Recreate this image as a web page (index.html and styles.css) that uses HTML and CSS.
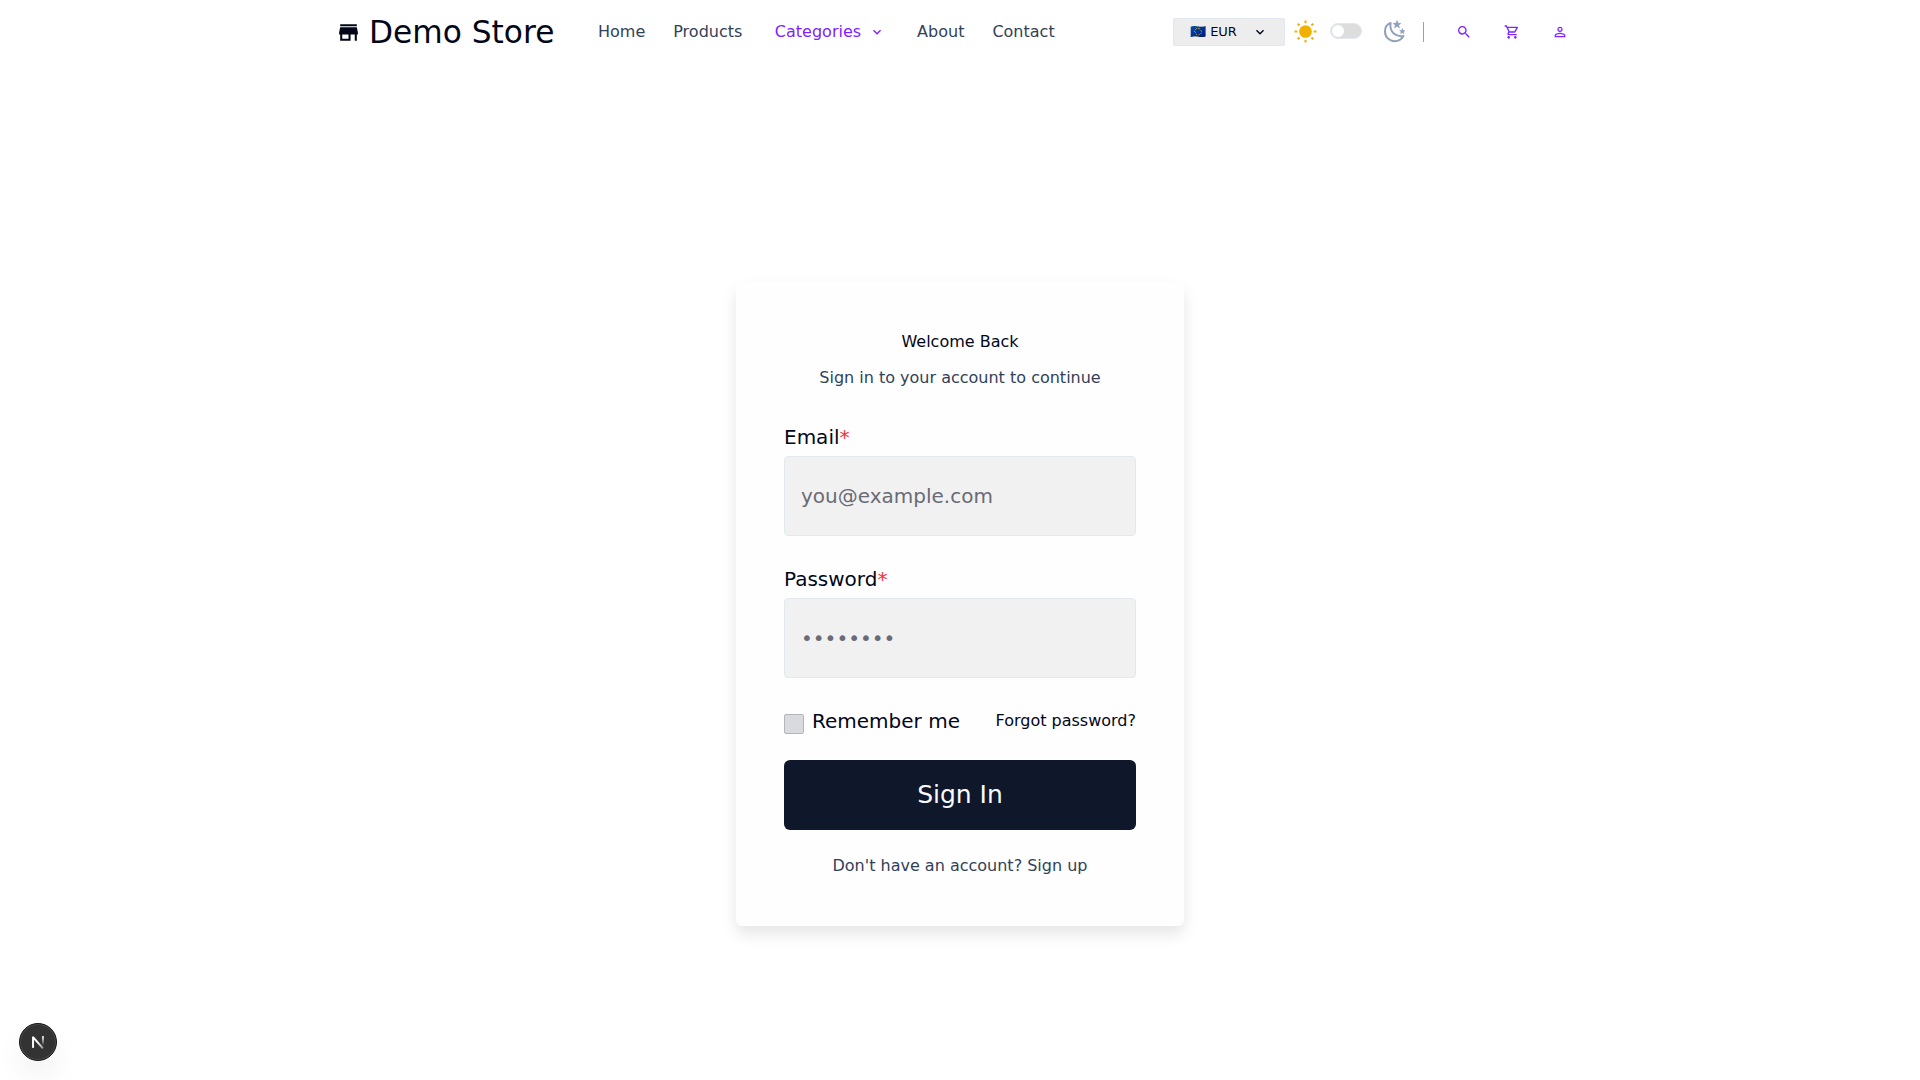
FILE: index.html
```html
<!DOCTYPE html>
<html lang="en">
<head>
<meta charset="utf-8">
<title>Demo Store</title>
<link rel="stylesheet" href="styles.css">
</head>
<body>
<header class="header">
  <a class="brand">
    <svg class="brand-icon" viewBox="0 0 24 24" fill="currentColor"><path d="M20 4H4v2h16V4zm1 10v-2l-1-5H4l-1 5v2h1v6h10v-6h4v6h2v-6h1zm-9 4H6v-4h6v4z"/></svg>
    <span>Demo Store</span>
  </a>
  <nav class="nav">
    <a>Home</a>
    <a>Products</a>
    <a class="categories">Categories
      <svg class="chevron" viewBox="0 0 24 24" fill="currentColor"><path d="M7.41 8.59 12 13.17l4.59-4.58L18 10l-6 6-6-6z"/></svg>
    </a>
    <a>About</a>
    <a>Contact</a>
  </nav>
  <div class="tools">
    <div class="currency"><div class="currency-box">
      <span class="currency-name">🇪🇺 EUR</span>
      <svg class="chevron-lg" viewBox="0 0 24 24" fill="currentColor"><path d="M7.41 8.59 12 13.17l4.59-4.58L18 10l-6 6-6-6z"/></svg>
    </div></div>
    <svg class="sun" viewBox="0 0 24 24" fill="currentColor" stroke="currentColor" stroke-width="2.1"><circle cx="12" cy="12" r="6.6" stroke="none"/><path d="M12 .5v3M12 20.5v3M.5 12h3M20.5 12h3M3.800 3.800l2 2M18.200 18.200l2 2M3.800 20.200l2-2M18.200 5.800l2-2"/></svg>
    <span class="toggle"><span class="knob"></span></span>
    <svg class="moon" viewBox="0 0 22 23"><path d="M6.600 2.900C2.700 4.400 1 8 1 11.500 1 17 5.300 21.200 10.600 21.200c3.600 0 7-1.900 8.900-5.200-7 1.400-14.500-3.500-12.900-13.100z" fill="none" stroke="currentColor" stroke-width="2" stroke-linejoin="round"/><path d="m13 .3 1.100 2.800 3 .2-2.300 1.900.8 2.900L13 6.500l-2.600 1.600.8-2.900-2.300-1.900 3-.2zM18.300 8.500l.8 1.800 2 .2-1.500 1.300.4 2-1.700-1-1.700 1 .4-2-1.500-1.300 2-.2z" fill="currentColor" stroke="currentColor" stroke-width=".4"/></svg>
    <span class="divider"></span>
    <svg class="tool-icon" viewBox="0 0 24 24" fill="currentColor"><path d="M15.500 14h-.79l-.28-.27A6.471 6.471 0 0 0 16 9.500 6.500 6.500 0 1 0 9.500 16c1.610 0 3.090-.59 4.230-1.570l.27.28v.79l5 4.990L20.490 19l-4.990-5zm-6 0C7.010 14 5 11.990 5 9.500S7.010 5 9.500 5 14 7.010 14 9.500 11.990 14 9.500 14z"/></svg>
    <svg class="tool-icon" viewBox="0 0 24 24" fill="currentColor"><path d="M15.550 13c.75 0 1.410-.41 1.750-1.030l3.580-6.490A.996.996 0 0 0 20.010 4H5.210l-.94-2H1v2h2l3.600 7.590-1.350 2.440C4.520 15.370 5.480 17 7 17h12v-2H7l1.100-2h7.450zM6.160 6h12.150l-2.760 5H8.530L6.160 6zM7 18c-1.100 0-1.990.9-1.990 2S5.900 22 7 22s2-.9 2-2-.9-2-2-2zm10 0c-1.100 0-1.990.9-1.990 2s.89 2 1.990 2 2-.9 2-2-.9-2-2-2z"/></svg>
    <svg class="tool-icon" viewBox="0 0 24 24" fill="currentColor"><path d="M12 5.900a2.100 2.100 0 1 1 0 4.200 2.100 2.100 0 0 1 0-4.200m0 9c2.970 0 6.100 1.460 6.100 2.100v1.100H5.900V17c0-.64 3.130-2.100 6.100-2.100M12 4C9.790 4 8 5.790 8 8s1.790 4 4 4 4-1.790 4-4-1.790-4-4-4zm0 9c-2.670 0-8 1.340-8 4v3h16v-3c0-2.660-5.330-4-8-4z"/></svg>
  </div>
</header>
<main class="main">
  <form class="card">
    <h1 class="title">Welcome Back</h1>
    <p class="subtitle">Sign in to your account to continue</p>
    <div class="field">
      <label class="label" for="email">Email<span class="required">*</span></label>
      <input class="input" id="email" type="email" placeholder="you@example.com">
    </div>
    <div class="field">
      <label class="label" for="password">Password<span class="required">*</span></label>
      <input class="input" id="password" type="password" placeholder="••••••••">
    </div>
    <div class="options">
      <label class="remember"><span class="checkbox"></span>Remember me</label>
      <a class="forgot">Forgot password?</a>
    </div>
    <button class="submit" type="button">Sign In</button>
    <p class="signup">Don't have an account? Sign up</p>
  </form>
</main>
<div class="dev-badge">
  <svg viewBox="0 0 40 40" fill="none">
    <defs>
      <linearGradient id="stem" x1="0" y1="13" x2="0" y2="24" gradientUnits="userSpaceOnUse"><stop stop-color="#fff"/><stop offset="1" stop-color="#fff" stop-opacity="0"/></linearGradient>
      <linearGradient id="diagonal" x1="20" y1="20" x2="27" y2="30" gradientUnits="userSpaceOnUse"><stop stop-color="#fff"/><stop offset="1" stop-color="#fff" stop-opacity="0.300"/></linearGradient>
    </defs>
    <path d="M14.500 14.500l11 12.500" stroke="url(#diagonal)" stroke-width="2.200"/>
    <path d="M14.500 26.500V14" stroke="#fff" stroke-width="2.200"/>
    <path d="M25.500 13.500v11" stroke="url(#stem)" stroke-width="2.200"/>
  </svg>
</div>
</body>
</html>
```
FILE: styles.css
```css
* { box-sizing: border-box; }
body {
  margin: 0;
  height: 1080px;
  overflow: hidden;
  display: flex;
  flex-direction: column;
  background: #fff;
  color: #020618;
  font: 16px/24px "DejaVu Sans", sans-serif;
}
h1, p { margin: 0; font-size: 16px; font-weight: 400; }
svg { display: block; flex: none; }

.header {
  display: flex;
  align-items: center;
  height: 64px;
  width: 1280px;
  margin: 0 auto;
  padding: 0 16px;
}
.brand { display: flex; align-items: center; gap: 8px; width: 262px; font-size: 31.25px; line-height: 48px; }
.brand-icon { width: 25px; height: 25px; }
.nav { display: flex; align-items: center; gap: 28px; color: #314158; }
.categories { display: flex; align-items: center; gap: 8px; padding: 0 4px 0 4.5px; color: #7f22fe; }
.chevron { width: 16px; height: 16px; }

.tools { display: flex; align-items: center; margin-left: auto; color: #7f22fe; }
.currency { width: 112px; height: 28px; background: #ededed; }
.currency-box {
  display: flex;
  align-items: center;
  justify-content: space-between;
  height: 28px;
  padding: 0 16px;
  border: 1px solid #e2e8f0;
  border-radius: 4px;
  color: #020618;
  font-size: 13px;
}
.chevron-lg { width: 16px; height: 16px; }
.sun { width: 23px; height: 23px; margin: 0 0 1px 9px; color: #f0b100; }
.toggle { width: 32px; height: 16px; margin: 0 0 2px 13px; padding: 1px; border: 1px solid #e2e8f0; border-radius: 8px; background: #ddd; }
.knob { display: block; width: 12px; height: 12px; border-radius: 50%; background: #fff; }
.moon { width: 22px; height: 23px; margin: 0 0 1px 22px; color: #90a1b9; }
.divider { width: 1px; height: 20px; margin: 0 16px 0 17px; background: #90a1b9; }
.tool-icon { width: 16px; height: 16px; margin: 0 16px; }

.main { flex: 1; display: flex; justify-content: center; align-items: flex-start; padding-top: 218px; }
.card {
  display: flex;
  flex-direction: column;
  width: 448px;
  padding: 48px;
  border-radius: 6px;
  background: #fefefe;
  box-shadow: 0 8px 16px rgba(0, 0, 0, .1);
}
.title, .subtitle, .signup { text-align: center; }
.subtitle { margin: 12px 0 4px; color: #314158; }
.field { display: flex; flex-direction: column; gap: 4px; margin-top: 28px; }
.label { font-size: 20px; line-height: 30px; }
.required { color: #fb2c36; }
.input {
  width: 100%;
  height: 80px;
  padding: 0 16px;
  border: 1px solid #e2e8f0;
  border-radius: 4px;
  background: #f1f1f1;
  font: 20px "DejaVu Sans", sans-serif;
}
.input::placeholder { color: #696b76; opacity: 1; }
.options { display: flex; align-items: center; justify-content: space-between; margin: 28px 0 24px; }
.remember { display: flex; gap: 8px; font-size: 20px; line-height: 30px; }
.checkbox { width: 20px; height: 20px; margin-top: 8px; border: 1px solid #b4b4ba; border-radius: 2px; background: #d9dadf; }
.submit { height: 70px; padding: 0 0 2px; border: 0; border-radius: 6px; background: #0f172b; color: #f8fafc; font: 25px "DejaVu Sans", sans-serif; }
.signup { margin-top: 24px; color: #314158; }

.dev-badge {
  position: absolute;
  left: 19px;
  top: 1023px;
  width: 38px;
  height: 38px;
  border: 1px solid #171717;
  border-radius: 50%;
  background: #333;
  box-shadow: inset 0 0 0 1px #4a4a4a, 0 16px 32px -8px rgba(0, 0, 0, .16);
}
```
